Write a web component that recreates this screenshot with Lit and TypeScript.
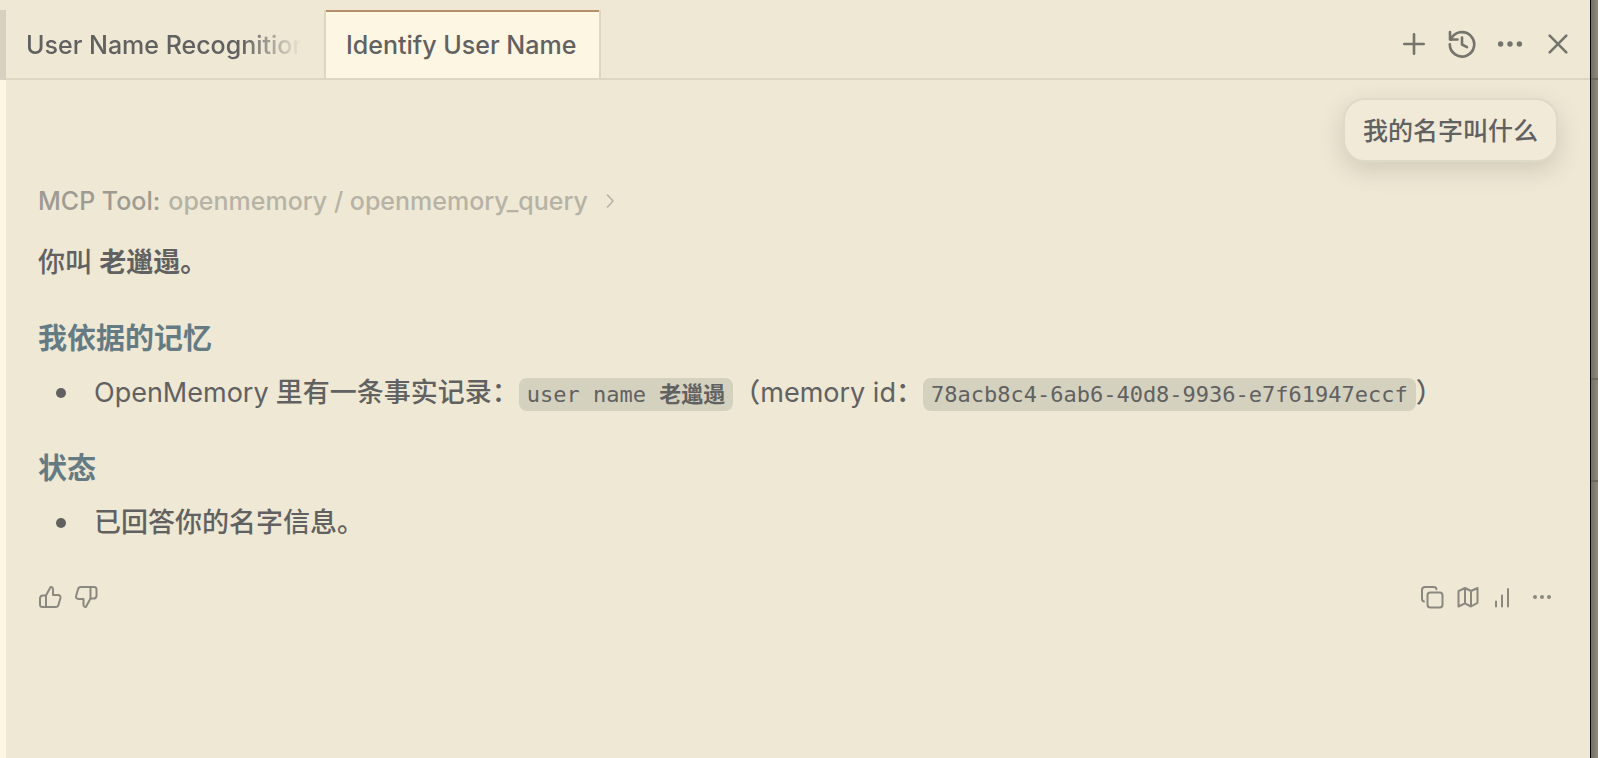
import { LitElement, html, css, svg } from "lit";
import { customElement, property } from "lit/decorators.js";

const glyphs: Record<string, { box: number; width: number; art: unknown }> = {
  plus: { box: 28, width: 2.6, art: svg`<path d="M14 4.300v19.400M4.300 14h19.400"/>` },
  history: {
    box: 28,
    width: 2.6,
    art: svg`<path d="M2 2v7.500h7.500"/><path d="M2.800 9.500A12.200 12.200 0 1 1 1.800 14.200"/><path d="M14 7.500v7l5 2.600"/>`,
  },
  dots: {
    box: 28,
    width: 0,
    art: svg`<g fill="currentColor"><circle cx="4.6" cy="14" r="2.700"/><circle cx="14" cy="14" r="2.700"/><circle cx="23.4" cy="14" r="2.700"/></g>`,
  },
  close: { box: 28, width: 2.6, art: svg`<path d="M5.700 5.700l16.600 16.600M22.300 5.700L5.700 22.300"/>` },
  chevron: { box: 16, width: 1.6, art: svg`<path d="M5.500 2l5.500 6-5.500 6"/>` },
  up: {
    box: 24,
    width: 2,
    art: svg`<path d="M8 10.500H5A3 3 0 0 0 2 13V19.500A2.500 2.500 0 0 0 4.500 22H8"/><path d="M8 10.500V22h9.600a3 3 0 0 0 2.900-2.300l2-7A2.300 2.300 0 0 0 20.200 10H15V4.500A2.200 2.200 0 0 0 12.600 2Z"/>`,
  },
  down: {
    box: 24,
    width: 2,
    art: svg`<path d="M16.500 13.500H19.500A3 3 0 0 0 22.500 11V4.500A2.500 2.500 0 0 0 20 2H16.500"/><path d="M16.500 13.500V2H6.900A3 3 0 0 0 4 4.300l-2 7A2.300 2.300 0 0 0 4.300 14H9.500V19.500A2.200 2.200 0 0 0 11.900 22Z"/>`,
  },
  copy: {
    box: 24,
    width: 2,
    art: svg`<rect x="7.500" y="7.500" width="15" height="15" rx="2.800"/><path d="M4 16.500A2.800 2.800 0 0 1 2 13.700V4.800A3 3 0 0 1 5 2h8.700a2.800 2.800 0 0 1 2.800 2.300"/>`,
  },
  map: {
    box: 24,
    width: 2,
    art: svg`<path d="M2.500 6.200L9 3l6 3 6.500-3v14.800L15 21.500 9 18.300 2.500 21.500zM9 3v15.300M15 6v15.500"/>`,
  },
  bars: { box: 24, width: 2, art: svg`<path d="M4 16.500v5M10 10.500v11M16 4v17.500"/>` },
  more: {
    box: 24,
    width: 0,
    art: svg`<g fill="currentColor"><circle cx="7" cy="12" r="2"/><circle cx="14" cy="12" r="2"/><circle cx="21" cy="12" r="2"/></g>`,
  },
};

@customElement("ui-glyph")
class UiGlyph extends LitElement {
  @property() name = "plus";

  static styles = css`
    :host { display: block; }
    .glyph { display: block; }
  `;

  render() {
    const g = glyphs[this.name];
    return html`<svg class="glyph" width=${g.box} height=${g.box} viewBox="0 0 ${g.box} ${g.box}"
      fill="none" stroke="currentColor" stroke-width=${g.width}
      stroke-linecap="round" stroke-linejoin="round" aria-hidden="true">${g.art}</svg>`;
  }
}

@customElement("app-root")
class AppRoot extends LitElement {
  static styles = css`
    :host {
      display: block;
      color: #616161;
      background: #eee8d5;
      font-family: Inter, "Noto Sans CJK SC", sans-serif;
      font-size: 25px;
      font-weight: 500;
      line-height: 36px;
    }
    * { box-sizing: border-box; }
    .frame {
      display: grid;
      grid-template-columns: 6px minmax(0, 1fr) 8px;
      min-height: 100vh;
      overflow: hidden;
    }
    .gutter { display: grid; grid-template-rows: 70px 1fr; padding-top: 10px; }
    .gutter-tab { background: #d9d1c0; }
    .gutter-page { background: #fdf6e3; }
    .desk {
      display: grid;
      grid-template-rows: 78px 2px 298px 2px 100px 2px 1fr;
      border-left: 1px solid #000;
      background: linear-gradient(90deg, #757062, #8f897b);
    }
    .desk-line { background: #6d685b; }
    .tabbar {
      display: flex;
      height: 80px;
      padding-top: 10px;
      box-shadow: inset 0 -2px #ddd6c1;
    }
    .tab {
      flex: none;
      height: 68px;
      padding: 2px 20px 0;
      border: 0;
      background: none;
      color: inherit;
      font: inherit;
      text-align: left;
      white-space: nowrap;
    }
    .tab-idle { width: 318px; }
    .tab-label {
      display: block;
      width: 276px;
      overflow: hidden;
      mask-image: linear-gradient(90deg, #000 calc(100% - 60px), transparent);
    }
    .tab-active {
      min-width: 277px;
      border: solid #ddd6c1;
      border-width: 0 2px;
      background: linear-gradient(#b58f6c 2px, #fdf6e3 2px);
    }
    .actions { display: flex; align-items: center; height: 68px; margin-left: auto; padding-right: 8px; }
    .icon-button {
      display: grid;
      place-items: center;
      padding: 0;
      border: 0;
      background: none;
      color: #74736c;
      width: 48px;
      height: 48px;
    }
    .chat { display: flex; flex-direction: column; padding: 18px 32px; }
    .question {
      align-self: flex-end;
      padding: 13px 18px 11px;
      margin: 0;
      border: 2px solid #dddac7;
      border-radius: 22px;
      background: #f1ead9;
      box-shadow: 0 8px 24px rgba(90, 85, 60, 0.2);
    }
    .tool {
      display: flex;
      align-items: center;
      align-self: flex-start;
      gap: 8px;
      margin-top: 21px;
      padding: 0;
      border: 0;
      background: none;
      font: inherit;
      color: #b6b3a6;
    }
    .tool-kind { color: #9d9b92; }
    .tool-mark { margin-left: 6px; }
    .answer { font-size: 27px; }
    .para { margin: 26px 0 0; }
    .heading {
      margin: 40px 0 0;
      color: #657b83;
      font-size: 29px;
      line-height: 36px;
      font-weight: 700;
    }
    .points + .heading { margin-top: 38px; }
    .points { margin: 18px 0 0; padding: 0 0 0 56px; list-style: none; }
    .point { display: flex; margin-left: -38px; }
    .point::before {
      content: "";
      flex: none;
      width: 10px;
      height: 10px;
      margin: 13px 28px 0 0;
      border-radius: 50%;
      background: currentColor;
    }
    .latin { font-weight: 400; }
    .code {
      padding: 4px 8px;
      border-radius: 8px;
      background: #d5d1bf;
      font-family: "DejaVu Sans Mono", "Noto Sans CJK SC", monospace;
      font-size: 22px;
    }
    .name { font-weight: 700; }
    .feedback { display: flex; align-items: center; margin-top: 38px; }
    .feedback .icon-button { width: 36px; height: 36px; color: #8a887f; }
    .rate { display: flex; margin-left: -6px; }
    .tools { display: flex; margin-left: auto; }
  `;

  button(name: string, label: string) {
    return html`<button class="icon-button" type="button" aria-label=${label}><ui-glyph name=${name}></ui-glyph></button>`;
  }

  render() {
    return html`
      <div class="frame" lang="zh-CN">
        <div class="gutter"><div class="gutter-tab"></div><div class="gutter-page"></div></div>
        <div class="panel">
          <header class="tabbar">
            <button class="tab tab-idle" type="button"><span class="tab-label">User Name Recognition</span></button>
            <button class="tab tab-active" type="button" aria-current="page">Identify User Name</button>
            <nav class="actions" aria-label="Chat">
              ${this.button("plus", "New chat")}${this.button("history", "History")}
              ${this.button("dots", "More")}${this.button("close", "Close")}
            </nav>
          </header>
          <main class="chat">
            <p class="question">我的名字叫什么</p>
            <button class="tool" type="button">
              <span class="tool-kind">MCP Tool:</span>
              <span>openmemory / openmemory_query</span>
              <ui-glyph class="tool-mark" name="chevron"></ui-glyph>
            </button>
            <article class="answer">
              <p class="para">你叫 <strong>老邋遢。</strong></p>
              <h3 class="heading">我依据的记忆</h3>
              <ul class="points">
                <li class="point"><div><span class="latin">OpenMemory</span> 里有一条事实记录：<code class="code">user name <span class="name">老邋遢</span></code>（<span class="latin">memory id</span>：<code class="code">78acb8c4-6ab6-40d8-9936-e7f61947eccf</code>）</div></li>
              </ul>
              <h3 class="heading">状态</h3>
              <ul class="points">
                <li class="point"><div>已回答你的名字信息。</div></li>
              </ul>
            </article>
            <footer class="feedback">
              <div class="rate">${this.button("up", "Good answer")}${this.button("down", "Bad answer")}</div>
              <div class="tools">
                ${this.button("copy", "Copy")}${this.button("map", "Map")}
                ${this.button("bars", "Usage")}${this.button("more", "More")}
              </div>
            </footer>
          </main>
        </div>
        <div class="desk">
          <i></i><i class="desk-line"></i><i></i><i class="desk-line"></i><i></i><i class="desk-line"></i>
        </div>
      </div>
    `;
  }
}
